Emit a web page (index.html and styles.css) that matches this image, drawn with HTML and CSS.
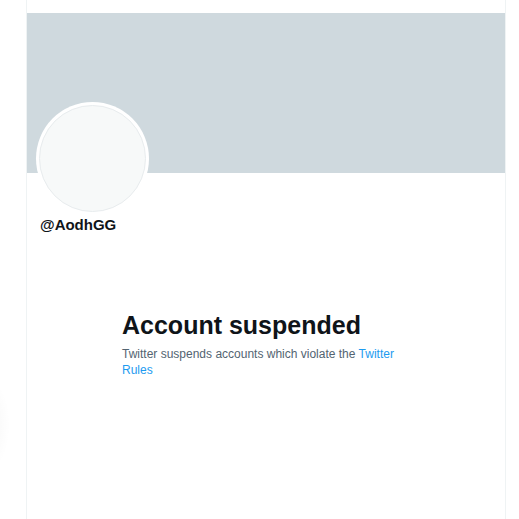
FILE: index.html
```html
<!DOCTYPE html>
<html>
<head>
<meta charset="utf-8">
<link rel="stylesheet" href="styles.css">
</head>
<body>
<div class="page">
  <div class="shadow"></div>
  <main class="column">
    <div class="top-gap"></div>
    <div class="banner"></div>
    <div class="profile">
      <div class="avatar"><div class="avatar-inner"></div></div>
      <div class="handle">@AodhGG</div>
    </div>
    <section class="empty">
      <h1 class="title">Account suspended</h1>
      <p class="desc">Twitter suspends accounts which violate the <a class="link" href="#">Twitter Rules</a></p>
    </section>
  </main>
</div>
</body>
</html>
```

FILE: styles.css
```css
html, body {
  margin: 0;
  padding: 0;
  background: #ffffff;
  font-family: "Liberation Sans", Arial, sans-serif;
}
.page {
  position: relative;
  height: 519px;
  overflow: hidden;
}
.shadow {
  position: absolute;
  left: -30px;
  top: 380px;
  width: 40px;
  height: 90px;
  border-radius: 50%;
  background: radial-gradient(closest-side, rgba(0,0,0,0.035), rgba(0,0,0,0));
}
.column {
  margin-left: 26px;
  width: 478px;
  height: 519px;
  border-left: 1px solid #eff3f4;
  border-right: 1px solid #eff3f4;
}
.top-gap {
  height: 13px;
}
.banner {
  height: 160px;
  background: #cfd9de;
}
.profile {
  position: relative;
  padding: 0 13px;
  height: 67px;
}
.avatar {
  position: absolute;
  left: 9px;
  top: -71px;
  width: 113px;
  height: 113px;
  border-radius: 50%;
  background: #ffffff;
  box-sizing: border-box;
  padding: 3px;
}
.avatar-inner {
  width: 100%;
  height: 100%;
  box-sizing: border-box;
  border-radius: 50%;
  background: #f7f9f9;
  border: 1px solid #e8ecee;
}
.handle {
  padding-top: 43px;
  font-weight: bold;
  font-size: 15px;
  line-height: 18px;
  color: #0f1419;
}
.empty {
  margin-top: 70px;
  padding-left: 95px;
  width: 290px;
}
.title {
  margin: 0;
  font-size: 25px;
  line-height: 30px;
  font-weight: bold;
  color: #0f1419;
}
.desc {
  margin: 6px 0 0;
  font-size: 12px;
  line-height: 16px;
  color: #536471;
}
.link {
  color: #1d9bf0;
  text-decoration: none;
}
```
